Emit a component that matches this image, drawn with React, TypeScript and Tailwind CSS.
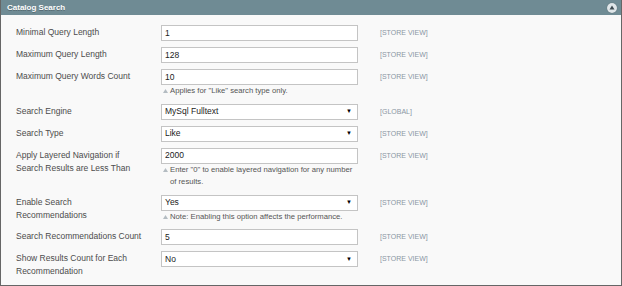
import React from 'react';

type Row = {
  label: string[];
  value: string;
  kind: 'input' | 'select';
  scope: string;
  note?: string[];
};

const rows: Row[] = [
  { label: ['Minimal Query Length'], value: '1', kind: 'input', scope: '[STORE VIEW]' },
  { label: ['Maximum Query Length'], value: '128', kind: 'input', scope: '[STORE VIEW]' },
  {
    label: ['Maximum Query Words Count'],
    value: '10',
    kind: 'input',
    scope: '[STORE VIEW]',
    note: ['Applies for "Like" search type only.'],
  },
  { label: ['Search Engine'], value: 'MySql Fulltext', kind: 'select', scope: '[GLOBAL]' },
  { label: ['Search Type'], value: 'Like', kind: 'select', scope: '[STORE VIEW]' },
  {
    label: ['Apply Layered Navigation if', 'Search Results are Less Than'],
    value: '2000',
    kind: 'input',
    scope: '[STORE VIEW]',
    note: ['Enter "0" to enable layered navigation for any number', 'of results.'],
  },
  {
    label: ['Enable Search', 'Recommendations'],
    value: 'Yes',
    kind: 'select',
    scope: '[STORE VIEW]',
    note: ['Note: Enabling this option affects the performance.'],
  },
  { label: ['Search Recommendations Count'], value: '5', kind: 'input', scope: '[STORE VIEW]' },
  {
    label: ['Show Results Count for Each', 'Recommendation'],
    value: 'No',
    kind: 'select',
    scope: '[STORE VIEW]',
  },
];

function Field({ row }: { row: Row }) {
  return (
    <div className="w-[197px]">
      <div className="flex h-[16px] items-center justify-between border border-[#c4c4c4] bg-white pl-[3px] pr-[5px] text-[8.5px] text-[#222]">
        <span>{row.value}</span>
        {row.kind === 'select' && <span className="text-[6px] text-black">▼</span>}
      </div>
      {row.note && (
        <div className="flex pl-[2px] text-[7.7px] leading-[12.5px] text-[#555]">
          <div className="flex h-[12.5px] w-[7px] items-center">
            <svg width="5" height="4" viewBox="0 0 5 4">
              <path d="M2.5 0 L5 4 L0 4 Z" fill="#b4bcc2" />
            </svg>
          </div>
          <div>
            {row.note.map((line) => (
              <div key={line}>{line}</div>
            ))}
          </div>
        </div>
      )}
    </div>
  );
}

export default function App() {
  return (
    <div className="h-[286px] w-[622px] bg-white font-['Liberation_Sans',Arial,sans-serif]">
      <div className="flex h-[286px] flex-col border-x border-b border-[#666]">
        <div className="flex h-[15px] items-center justify-between bg-[#6f8b94] pl-[6px] pr-[4px]">
          <span className="text-[8px] font-bold text-white [text-shadow:0_1px_0_rgba(0,0,0,0.25)]">Catalog Search</span>
          <span className="flex h-[10px] w-[10px] items-center justify-center rounded-full bg-[#dfe6e9] shadow-[0_0_1px_rgba(0,0,0,0.4)]">
            <svg width="6" height="5" viewBox="0 0 6 5">
              <path d="M3 0.5 L5.5 4.5 L0.5 4.5 Z" fill="#3d4a50" />
            </svg>
          </span>
        </div>
        <div className="flex flex-1 flex-col gap-[6px] bg-[#f9f9f9] pl-[15px] pt-[10px]">
          {rows.map((row) => (
            <div key={row.label.join(' ')} className="flex items-start">
              <div className="w-[145px] pt-[1px] text-[8.5px] leading-[13px] text-[#4c4c4c]">
                {row.label.map((l) => (
                  <div key={l}>{l}</div>
                ))}
              </div>
              <Field row={row} />
              <div className="ml-[22px] pt-[2px] text-[7px] leading-[12px] text-[#8a97a4]">{row.scope}</div>
            </div>
          ))}
        </div>
      </div>
    </div>
  );
}
